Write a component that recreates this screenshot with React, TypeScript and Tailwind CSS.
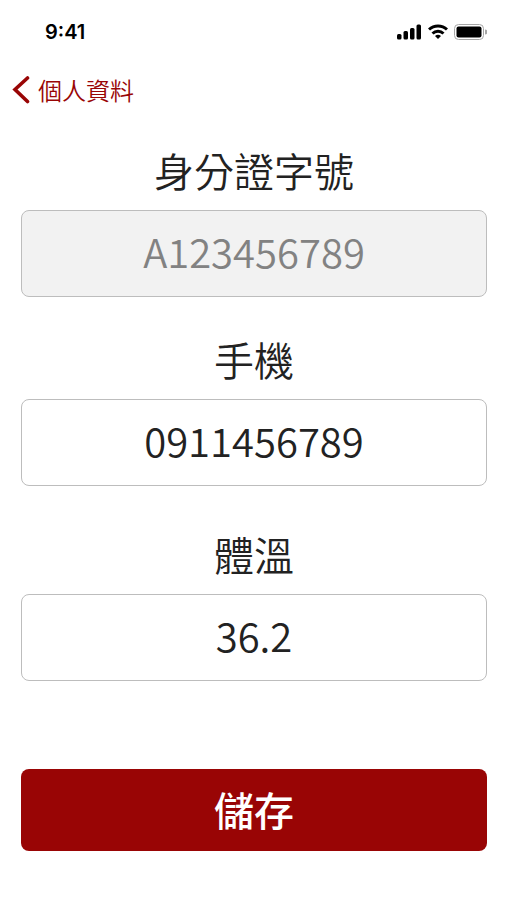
const fields = [
  { id: 'idNumber', label: '身分證字號', value: 'A123456789', disabled: true, gap: 'mb-9' },
  { id: 'phone', label: '手機', value: '0911456789', disabled: false, gap: 'mb-[42px]' },
  { id: 'temperature', label: '體溫', value: '36.2', disabled: false, gap: 'mb-[88px]' },
]

export default function App() {
  return (
    <div className="min-h-screen bg-white text-[#222] font-['Noto_Sans_CJK_TC',sans-serif]">
      <StatusBar />

      <nav className="flex px-3 pt-2">
        <a href="#profile" className="flex items-center gap-2 text-2xl leading-9 font-[350] text-[#990505]">
          <svg width="18" height="28" viewBox="0 0 18 28" fill="none" stroke="currentColor" strokeWidth="3.6" strokeLinecap="round" aria-hidden="true">
            <path d="M15.500 2 3 13.500l12.500 12" />
          </svg>
          個人資料
        </a>
      </nav>

      <form className="pt-9 pr-5 pl-[21px]" onSubmit={e => e.preventDefault()}>
        {fields.map(f => (
          <div key={f.id} className={f.gap}>
            <label htmlFor={f.id} className="mb-[14px] block text-center text-[40px] leading-[52px] font-[350]">{f.label}</label>
            <input
              id={f.id}
              defaultValue={f.value}
              disabled={f.disabled}
              className="block h-[87px] w-full rounded-lg border border-[#bdbdbd] bg-white pb-1.5 text-center text-[40px] font-[350] disabled:bg-[#f2f2f2] disabled:text-[#828282]"
            />
          </div>
        ))}
        <button type="submit" className="h-[82px] w-full rounded-lg bg-[#990505] pb-0.5 text-[40px] font-medium text-white">
          儲存
        </button>
      </form>
    </div>
  )
}

function StatusBar() {
  return (
    <div className="flex h-16 items-center justify-between pl-[45px] pr-5 text-black">
      <span className="font-['Inter',sans-serif] text-xl font-semibold">9:41</span>
      <div className="flex items-center gap-1.5">
        <svg width="25" height="16" viewBox="0 0 25 16" fill="currentColor" aria-hidden="true">
          <rect x="0" y="10" width="4.500" height="5.500" rx="1.500" />
          <rect x="6.500" y="7" width="4.500" height="8.500" rx="1.500" />
          <rect x="13" y="4" width="4.500" height="11.500" rx="1.500" />
          <rect x="19.500" y="0.500" width="4.500" height="15" rx="1.500" />
        </svg>
        <svg width="20" height="16" viewBox="0 0 20 16" fill="none" stroke="currentColor" strokeWidth="3" aria-hidden="true">
          <path d="M1 5.500a13 13 0 0 1 18 0M4.500 9.500a8 8 0 0 1 11 0" />
          <path d="m10 15-3-3a4.500 4.500 0 0 1 6 0z" fill="currentColor" stroke="none" />
        </svg>
        <svg width="33" height="16" viewBox="0 0 33 16" fill="none" aria-hidden="true">
          <rect x=".5" y=".5" width="29" height="15" rx="4" stroke="#a6a6a6" />
          <rect x="2.500" y="2.500" width="25" height="11" rx="2" fill="black" />
          <path d="M31 5.500v5a2.500 2.500 0 0 0 0-5" fill="#a6a6a6" />
        </svg>
      </div>
    </div>
  )
}
